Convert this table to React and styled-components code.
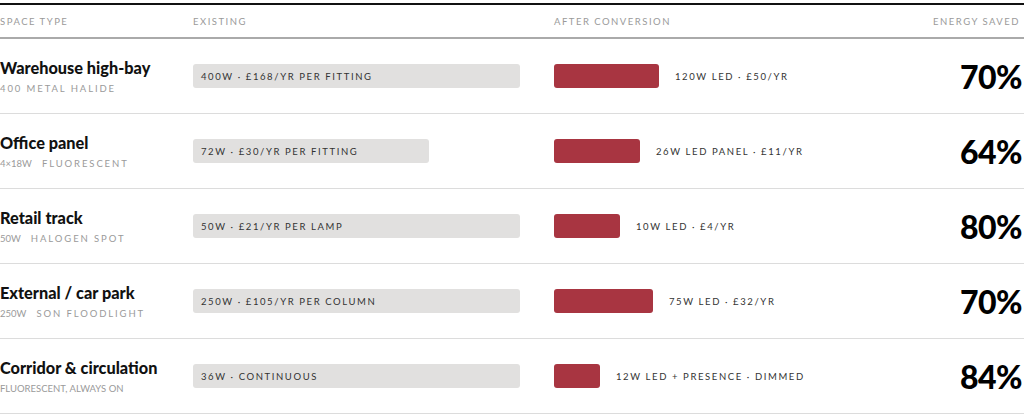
import React from "react";
import styled, { createGlobalStyle } from "styled-components";

const GlobalStyle = createGlobalStyle`
  html, body {
    margin: 0;
    padding: 0;
    background: #ffffff;
  }
  body {
    font-family: "Lato", "Noto Sans", sans-serif;
    color: #111;
  }
`;

const Table = styled.div`
  padding-top: 3px;
  width: 1024px;
`;

const Grid = styled.div`
  display: grid;
  grid-template-columns: 193px 361px 1fr 120px;
  align-items: center;
`;

const Head = styled(Grid)`
  border-top: 2px solid #111;
  border-bottom: 2px solid #aaa;
  height: 32px;
`;

const HeadCell = styled.div`
  font-size: 9.5px;
  letter-spacing: 1.5px;
  color: #9a9a9a;
  text-transform: uppercase;
  text-align: ${(p) => (p.$right ? "right" : "left")};
  margin-right: ${(p) => (p.$right ? "4px" : "0")};
`;

const Row = styled(Grid)`
  height: 74px;
  border-bottom: 1px solid #dcdcdc;
`;

const Title = styled.div`
  font-size: 16.3px;
  font-weight: 900;
  color: #111;
  line-height: 22px;
`;

const Sub = styled.div`
  font-size: 9.5px;
  color: #9a9a9a;
  line-height: 14px;
  margin-top: 3px;
  text-transform: uppercase;
`;

const Spaced = styled.span`
  letter-spacing: 1.9px;
  margin-left: ${(p) => (p.$gap ? "10px" : "0")};
`;

const ExistingBar = styled.div`
  height: 24px;
  width: ${(p) => p.$w}px;
  background: #e1e0df;
  border-radius: 3px;
  display: flex;
  align-items: center;
  padding-left: 8px;
  box-sizing: border-box;
  font-size: 9.5px;
  letter-spacing: 1.6px;
  color: #333;
  text-transform: uppercase;
  white-space: nowrap;
`;

const After = styled.div`
  display: flex;
  align-items: center;
  gap: 16px;
`;

const AfterBar = styled.div`
  height: 24px;
  width: ${(p) => p.$w}px;
  background: #a83541;
  border-radius: 3px;
`;

const AfterLabel = styled.span`
  font-size: 9.5px;
  letter-spacing: 1.6px;
  color: #333;
  text-transform: uppercase;
  white-space: nowrap;
`;

const Saved = styled.div`
  font-size: 32px;
  font-weight: 900;
  color: #000;
  text-align: right;
  letter-spacing: -0.5px;
  margin-right: 2px;
`;

const rows = [
  {
    title: "Warehouse high-bay",
    sub: <Spaced>400 Metal Halide</Spaced>,
    existing: "400W · £168/yr per fitting",
    ew: 327,
    after: "120W LED · £50/yr",
    aw: 105,
    saved: "70%",
  },
  {
    title: "Office panel",
    sub: (
      <>
        4×18W<Spaced $gap>Fluorescent</Spaced>
      </>
    ),
    existing: "72W · £30/yr per fitting",
    ew: 236,
    after: "26W LED panel · £11/yr",
    aw: 86,
    saved: "64%",
  },
  {
    title: "Retail track",
    sub: (
      <>
        50W<Spaced $gap>Halogen spot</Spaced>
      </>
    ),
    existing: "50W · £21/yr per lamp",
    ew: 327,
    after: "10W LED · £4/yr",
    aw: 66,
    saved: "80%",
  },
  {
    title: "External / car park",
    sub: (
      <>
        250W<Spaced $gap>SON floodlight</Spaced>
      </>
    ),
    existing: "250W · £105/yr per column",
    ew: 327,
    after: "75W LED · £32/yr",
    aw: 99,
    saved: "70%",
  },
  {
    title: "Corridor & circulation",
    sub: "Fluorescent, always on",
    existing: "36W · continuous",
    ew: 327,
    after: "12W LED + presence · dimmed",
    aw: 46,
    saved: "84%",
  },
];

export default function App() {
  return (
    <>
      <GlobalStyle />
      <Table>
        <Head>
          <HeadCell>Space type</HeadCell>
          <HeadCell>Existing</HeadCell>
          <HeadCell>After conversion</HeadCell>
          <HeadCell $right>Energy saved</HeadCell>
        </Head>
        {rows.map((r) => (
          <Row key={r.title}>
            <div>
              <Title>{r.title}</Title>
              <Sub>{r.sub}</Sub>
            </div>
            <ExistingBar $w={r.ew}>{r.existing}</ExistingBar>
            <After>
              <AfterBar $w={r.aw} />
              <AfterLabel>{r.after}</AfterLabel>
            </After>
            <Saved>{r.saved}</Saved>
          </Row>
        ))}
      </Table>
    </>
  );
}
